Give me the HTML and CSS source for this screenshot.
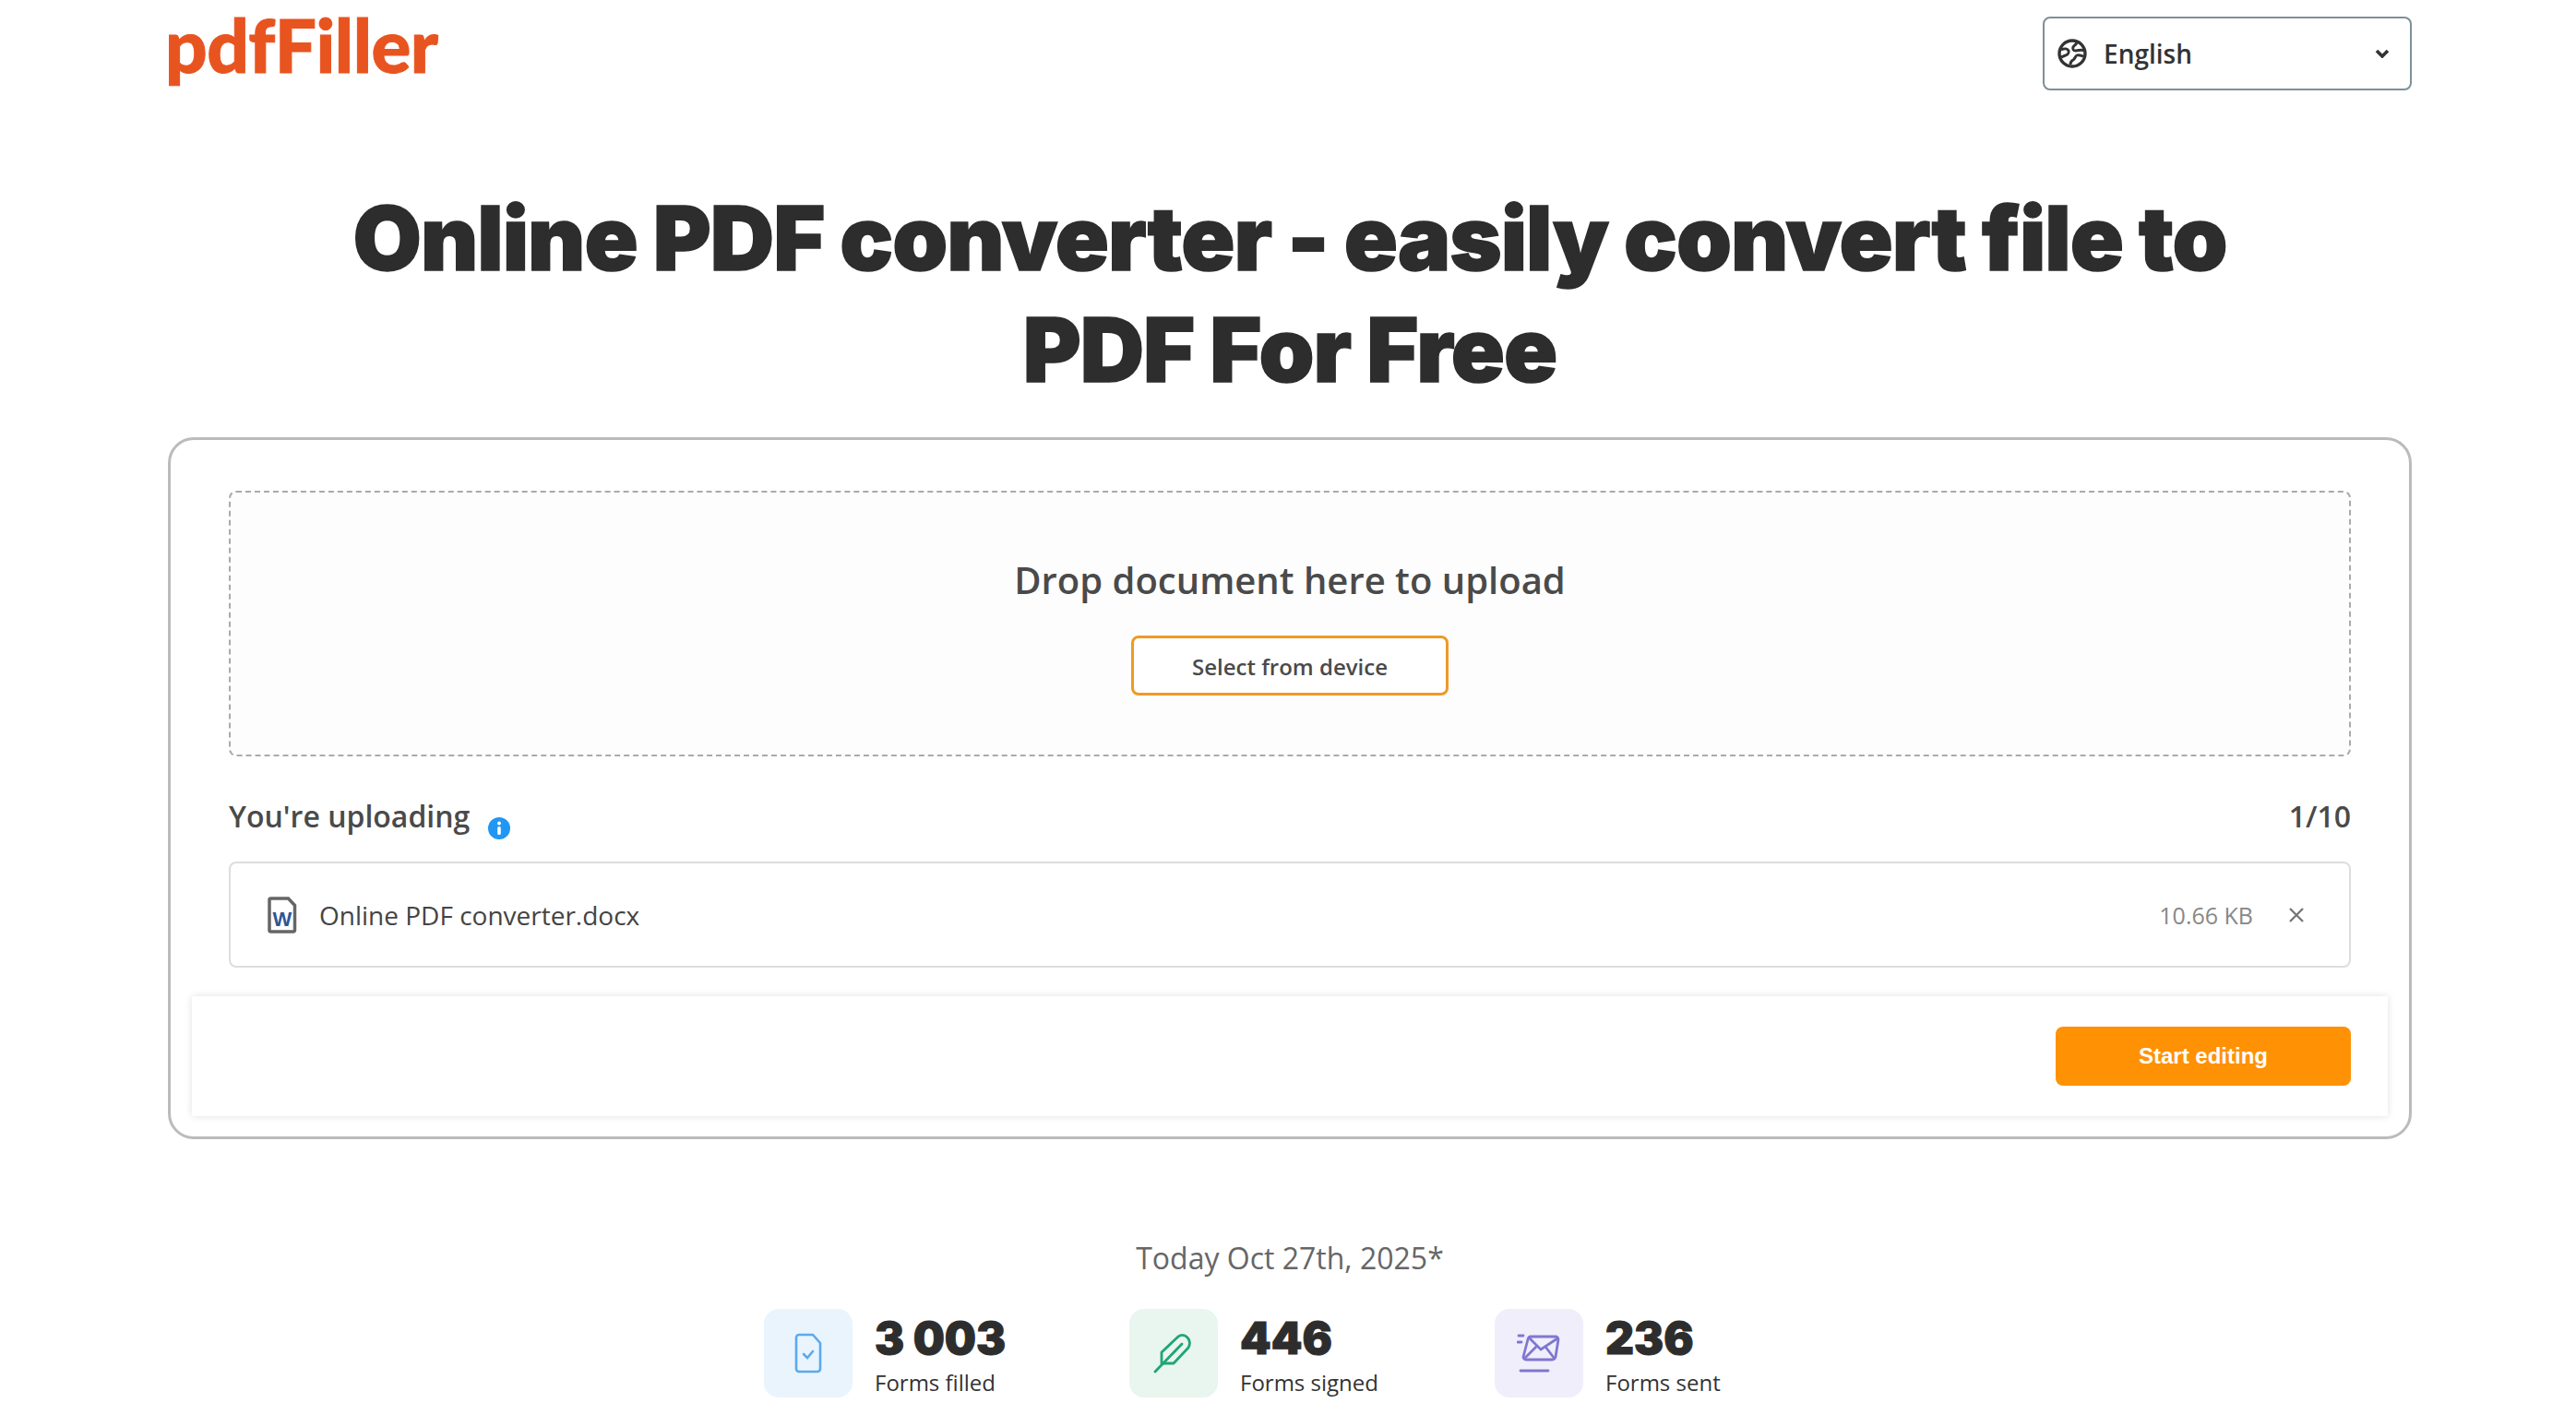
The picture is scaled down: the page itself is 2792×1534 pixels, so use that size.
FILE: index.html
```html
<!DOCTYPE html>
<html lang="en">
<head>
    <meta charset="UTF-8">
    <meta name="viewport" content="width=device-width, initial-scale=1.0">
    <title>Online PDF converter</title>
    <link rel="stylesheet" href="styles.css">
</head>
<body>

<div class="page">
    <header class="top-bar">
        <a class="logo">pdfFiller</a>
        <div class="lang-select">
            <svg class="globe" viewBox="0 0 32 32" width="32" height="32">
                <circle cx="16" cy="16" r="14" fill="none" stroke="#333" stroke-width="3.4"/>
                <path d="M4 12c4-2 7-1 8 1s-1 4-3 5l-5 2M21 4c-1 3-3 3-4 5s0 4 3 4 6-2 9 0M14 28c0-3 1-4 3-5s2-4 4-5 4 0 7 1" fill="none" stroke="#333" stroke-width="3"/>
            </svg>
            <span class="lang-name">English</span>
            <svg class="chevron" viewBox="0 0 16 10" width="16" height="10">
                <path d="M2 2l6 6 6-6" fill="none" stroke="#333" stroke-width="3.600"/>
            </svg>
        </div>
    </header>

    <h1>Online PDF converter - easily convert file to<br>PDF For Free</h1>

    <section class="upload-card">
        <div class="drop-zone">
            <p class="drop-title">Drop document here to upload</p>
            <button class="select-btn">Select from device</button>
        </div>

        <div class="list-head">
            <div class="list-title">
                <span>You're uploading</span>
                <svg class="info" viewBox="0 0 24 24" width="24" height="24">
                    <circle cx="12" cy="12" r="12" fill="#2196f3"/>
                    <circle cx="12" cy="6.500" r="2" fill="#fff"/>
                    <rect x="10.200" y="10" width="3.600" height="9" rx="1.600" fill="#fff"/>
                </svg>
            </div>
            <span class="list-count">1/10</span>
        </div>

        <div class="file-row">
            <svg class="file-icon" viewBox="0 0 32 40" width="32" height="40">
                <path d="M2 3.500a1.500 1.500 0 0 1 1.500-1.500h19l7 7.500v27a1.500 1.500 0 0 1-1.500 1.500h-24.500a1.500 1.500 0 0 1-1.500-1.500z" fill="#fff" stroke="#666" stroke-width="3.500"/>
                <text x="16" y="32" text-anchor="middle" class="file-w">W</text>
            </svg>
            <span class="file-name">Online PDF converter.docx</span>
            <span class="file-size">10.66 KB</span>
            <svg class="file-close" viewBox="0 0 18 18" width="18" height="18">
                <path d="M2 2l14 14M16 2L2 16" stroke="#777" stroke-width="2.400" fill="none"/>
            </svg>
        </div>

        <div class="action-bar">
            <button class="start-btn">Start editing</button>
        </div>
    </section>

    <section class="stats">
        <p class="stats-date">Today Oct 27th, 2025*</p>
        <div class="stats-row">
            <div class="stat stat-filled">
                <div class="stat-icon stat-icon-blue">
                    <svg viewBox="0 0 32 44" width="32" height="44">
                        <path d="M3 5a3 3 0 0 1 3-3h15l8 9v28a3 3 0 0 1-3 3H6a3 3 0 0 1-3-3z" fill="none" stroke="#5aa9ee" stroke-width="2.600" stroke-linejoin="round"/>
                        <path d="M11 23l4 4 6-7" fill="none" stroke="#5aa9ee" stroke-width="2.600" stroke-linecap="round"/>
                    </svg>
                </div>
                <div>
                    <div class="stat-num">3 003</div>
                    <div class="stat-label">Forms filled</div>
                </div>
            </div>
            <div class="stat stat-signed">
                <div class="stat-icon stat-icon-green">
                    <svg viewBox="0 0 44 44" width="44" height="44">
                        <path d="M9 33V21L27 4c3-2 7-2 10 1s3 8 1 11L22 33z" fill="none" stroke="#1ea672" stroke-width="2.800" stroke-linejoin="round"/>
                        <path d="M2 42L31 12" fill="none" stroke="#1ea672" stroke-width="2.800" stroke-linecap="round"/>
                    </svg>
                </div>
                <div>
                    <div class="stat-num">446</div>
                    <div class="stat-label">Forms signed</div>
                </div>
            </div>
            <div class="stat stat-sent">
                <div class="stat-icon stat-icon-purple">
                    <svg viewBox="0 0 48 44" width="48" height="44">
                        <path d="M12 7a3 3 0 0 1 3-3h27a3 3 0 0 1 3 3l-3 19a4 4 0 0 1-4 3H10a3 3 0 0 1-3-3z" fill="none" stroke="#7f77d1" stroke-width="2.800" stroke-linejoin="round"/>
                        <path d="M13 5l13 13L44 6M8 28l13-13M41 28L31 15" fill="none" stroke="#7f77d1" stroke-width="2.800"/>
                        <path d="M2 3h5M1 10h4M4 41h30" fill="none" stroke="#7f77d1" stroke-width="2.800" stroke-linecap="round"/>
                    </svg>
                </div>
                <div>
                    <div class="stat-num">236</div>
                    <div class="stat-label">Forms sent</div>
                </div>
            </div>
        </div>
    </section>
</div>

</body>
</html>
```

FILE: styles.css
```css
html, body {
    margin: 0;
    height: 100%;
    overflow: hidden;
}

body {
    font-family: "Open Sans", Arial, sans-serif;
    background-color: #fff;
    color: #333;
}

.page {
    width: 2432px;
    margin-left: 182px;
}

.top-bar {
    display: flex;
    justify-content: space-between;
    align-items: flex-start;
    height: 98px;
    padding-top: 18px;
    box-sizing: border-box;
}

.logo {
    margin-left: -3px;
    font-family: Lato, sans-serif;
    font-weight: 900;
    font-size: 80px;
    line-height: 60px;
    letter-spacing: -0.500px;
    color: #e85420;
    -webkit-text-stroke: 1px #e85420;
}

.lang-select {
    display: flex;
    align-items: center;
    width: 400px;
    height: 80px;
    box-sizing: border-box;
    border: 2px solid #7f8f99;
    border-radius: 8px;
    padding: 0 22px 0 14px;
}

.lang-name {
    flex: 1;
    margin-left: 18px;
    font-size: 28px;
    font-weight: 600;
}

h1 {
    margin: 100px 0 0;
    text-align: center;
    font-family: Inter, sans-serif;
    font-weight: 900;
    font-size: 96px;
    line-height: 121px;
    letter-spacing: -1px;
    word-spacing: -1px;
    color: #2d2d2d;
    -webkit-text-stroke: 1.500px #2d2d2d;
}

.upload-card {
    margin-top: 34px;
    height: 761px;
    box-sizing: border-box;
    border: 3px solid #bbb;
    border-radius: 28px;
    padding: 55px 63px 0;
}

.drop-zone {
    height: 288px;
    box-sizing: border-box;
    border: 2px dashed #aaa;
    border-radius: 8px;
    background-color: #fdfdfd;
    display: flex;
    flex-direction: column;
    align-items: center;
    padding-top: 68px;
}

.drop-title {
    margin: 0;
    font-size: 40px;
    line-height: 54px;
    font-weight: 600;
    color: #4a4a4a;
}

.select-btn {
    margin-top: 33px;
    padding-top: 3px;
    width: 344px;
    height: 65px;
    background-color: #fff;
    border: 3px solid #ee9a26;
    border-radius: 8px;
    font-family: inherit;
    font-size: 24px;
    font-weight: 600;
    color: #4a4a4a;
}

.list-head {
    display: flex;
    justify-content: space-between;
    align-items: center;
    margin-top: 42px;
    height: 44px;
    font-size: 32px;
    font-weight: 600;
    color: #4a4a4a;
}

.list-title {
    display: flex;
    align-items: center;
}

.info {
    margin: 28px 0 0 20px;
}

.file-row {
    display: flex;
    align-items: center;
    margin-top: 28px;
    height: 115px;
    box-sizing: border-box;
    border: 2px solid #ddd;
    border-radius: 8px;
    padding: 0 48px 0 40px;
}

.file-w {
    font-family: "Liberation Sans", sans-serif;
    font-weight: 700;
    font-size: 22px;
    fill: #2f5597;
}

.file-name {
    flex: 1;
    margin-left: 24px;
    font-size: 28px;
    color: #444;
}

.file-size {
    font-size: 25px;
    color: #888;
    margin-right: 38px;
}

.action-bar {
    display: flex;
    justify-content: flex-end;
    align-items: center;
    margin: 31px -40px 0;
    height: 130px;
    padding-right: 40px;
    background-color: #fff;
    box-shadow: 0 0 8px rgba(0, 0, 0, 0.12);
}

.start-btn {
    width: 320px;
    height: 64px;
    background-color: #ff9105;
    color: #fff;
    border: none;
    border-radius: 8px;
    font-family: "Liberation Sans", Arial, sans-serif;
    font-size: 24px;
    font-weight: 700;
}

.stats {
    margin-top: 104px;
}

.stats-date {
    margin: 0;
    text-align: center;
    font-size: 32px;
    line-height: 50px;
    color: #666;
}

.stats-row {
    display: flex;
    margin: 30px 0 0 646px;
}

.stat {
    display: flex;
    width: 396px;
    gap: 24px;
}

.stat-icon {
    display: flex;
    align-items: center;
    justify-content: center;
    width: 96px;
    height: 96px;
    border-radius: 16px;
}

.stat-icon-blue { background-color: #eaf4fd; }
.stat-icon-green { background-color: #e9f5ef; }
.stat-icon-purple { background-color: #f0eefb; }

.stat-num {
    padding-top: 3px;
    font-family: Inter, sans-serif;
    font-weight: 900;
    font-size: 48px;
    line-height: 58px;
    color: #2d2d2d;
    -webkit-text-stroke: 1px #2d2d2d;
}

.stat-label {
    font-size: 24px;
    line-height: 38px;
    color: #333;
}
```
